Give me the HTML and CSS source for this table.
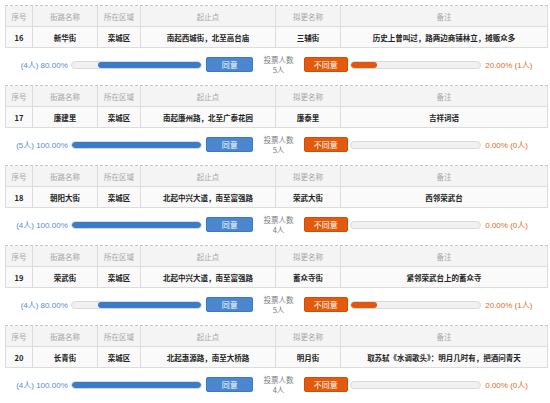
FILE: index.html
```html
<!DOCTYPE html>
<html lang="zh-CN">
<head>
<meta charset="utf-8">
<link rel="stylesheet" href="styles.css">
</head>
<body>
<div class="list">

  <div class="block">
    <div class="grid">
      <div class="th">序号</div><div class="th">街路名称</div><div class="th">所在区域</div><div class="th">起止点</div><div class="th">拟更名称</div><div class="th">备注</div>
      <div class="td">16</div><div class="td">新华街</div><div class="td">栾城区</div><div class="td">南起西城街，北至高台庙</div><div class="td">三辅街</div><div class="td">历史上曾叫过，路两边商铺林立，摊贩众多</div>
    </div>
    <div class="vote">
      <div class="lab lab-yes">(4人) 80.00%</div>
      <div class="bar bar-yes"><div class="fill fill-yes" style="width:80%"></div></div>
      <div class="btn btn-yes">同意</div>
      <div class="count">投票人数<br>5人</div>
      <div class="btn btn-no">不同意</div>
      <div class="bar bar-no"><div class="fill fill-no" style="width:20%"></div></div>
      <div class="lab lab-no">20.00% (1人)</div>
    </div>
  </div>

  <div class="block">
    <div class="grid">
      <div class="th">序号</div><div class="th">街路名称</div><div class="th">所在区域</div><div class="th">起止点</div><div class="th">拟更名称</div><div class="th">备注</div>
      <div class="td">17</div><div class="td">廉建里</div><div class="td">栾城区</div><div class="td">南起廉州路，北至广泰花园</div><div class="td">廉泰里</div><div class="td">吉祥词语</div>
    </div>
    <div class="vote">
      <div class="lab lab-yes">(5人) 100.00%</div>
      <div class="bar bar-yes"><div class="fill fill-yes" style="width:100%"></div></div>
      <div class="btn btn-yes">同意</div>
      <div class="count">投票人数<br>5人</div>
      <div class="btn btn-no">不同意</div>
      <div class="bar bar-no"><div class="fill fill-no" style="width:0%"></div></div>
      <div class="lab lab-no">0.00% (0人)</div>
    </div>
  </div>

  <div class="block">
    <div class="grid">
      <div class="th">序号</div><div class="th">街路名称</div><div class="th">所在区域</div><div class="th">起止点</div><div class="th">拟更名称</div><div class="th">备注</div>
      <div class="td">18</div><div class="td">朝阳大街</div><div class="td">栾城区</div><div class="td">北起中兴大道，南至富强路</div><div class="td">荣武大街</div><div class="td">西邻荣武台</div>
    </div>
    <div class="vote">
      <div class="lab lab-yes">(4人) 100.00%</div>
      <div class="bar bar-yes"><div class="fill fill-yes" style="width:100%"></div></div>
      <div class="btn btn-yes">同意</div>
      <div class="count">投票人数<br>4人</div>
      <div class="btn btn-no">不同意</div>
      <div class="bar bar-no"><div class="fill fill-no" style="width:0%"></div></div>
      <div class="lab lab-no">0.00% (0人)</div>
    </div>
  </div>

  <div class="block">
    <div class="grid">
      <div class="th">序号</div><div class="th">街路名称</div><div class="th">所在区域</div><div class="th">起止点</div><div class="th">拟更名称</div><div class="th">备注</div>
      <div class="td">19</div><div class="td">荣武街</div><div class="td">栾城区</div><div class="td">北起中兴大道，南至富强路</div><div class="td">蓄众寺街</div><div class="td">紧邻荣武台上的蓄众寺</div>
    </div>
    <div class="vote">
      <div class="lab lab-yes">(4人) 80.00%</div>
      <div class="bar bar-yes"><div class="fill fill-yes" style="width:80%"></div></div>
      <div class="btn btn-yes">同意</div>
      <div class="count">投票人数<br>5人</div>
      <div class="btn btn-no">不同意</div>
      <div class="bar bar-no"><div class="fill fill-no" style="width:20%"></div></div>
      <div class="lab lab-no">20.00% (1人)</div>
    </div>
  </div>

  <div class="block">
    <div class="grid">
      <div class="th">序号</div><div class="th">街路名称</div><div class="th">所在区域</div><div class="th">起止点</div><div class="th">拟更名称</div><div class="th">备注</div>
      <div class="td">20</div><div class="td">长青街</div><div class="td">栾城区</div><div class="td">北起惠源路，南至大桥路</div><div class="td">明月街</div><div class="td">取苏轼《水调歌头》：明月几时有，把酒问青天</div>
    </div>
    <div class="vote">
      <div class="lab lab-yes">(4人) 100.00%</div>
      <div class="bar bar-yes"><div class="fill fill-yes" style="width:100%"></div></div>
      <div class="btn btn-yes">同意</div>
      <div class="count">投票人数<br>4人</div>
      <div class="btn btn-no">不同意</div>
      <div class="bar bar-no"><div class="fill fill-no" style="width:0%"></div></div>
      <div class="lab lab-no">0.00% (0人)</div>
    </div>
  </div>

</div>
</body>
</html>
```

FILE: styles.css
```css
html, body {
  margin: 0;
  padding: 0;
  background: #ffffff;
}
body {
  font-family: "Liberation Sans", "Noto Sans CJK SC", sans-serif;
  font-size: 8px;
  color: #333;
}
.list {
  padding: 5px 2px 0 5px;
  width: 543px;
}
.block {
  display: flex;
  flex-direction: column;
}
.grid {
  display: grid;
  grid-template-columns: 26px 64px 42px 134px 64px 206px;
  grid-template-rows: 20px 20px;
  gap: 1px;
  background: #dcdcdc;
  background-clip: padding-box;
  border: 1px solid #dcdcdc;
  border-top: 1px dashed #c4c4c4;
}
.th, .td {
  display: flex;
  align-items: center;
  justify-content: center;
  white-space: nowrap;
  overflow: hidden;
  font-family: "Noto Sans CJK SC", "Liberation Sans", sans-serif;
}
.th {
  background: #f4f4f4;
  color: #a6a6a6;
  font-size: 7.5px;
}
.td {
  background: #fafafa;
  color: #222;
  font-size: 7.5px;
  font-weight: 700;
}
.vote {
  display: flex;
  align-items: center;
  height: 15px;
  margin: 9px 0 13px 0;
}
.lab {
  width: 63px;
  white-space: nowrap;
  font-family: "Liberation Sans", "Noto Sans CJK SC", sans-serif;
  font-size: 8px;
}
.lab-yes {
  text-align: right;
  margin-right: 3px;
  color: #5b88c8;
}
.lab-no {
  margin-left: 4px;
  color: #e46a26;
}
.bar {
  width: 132px;
  height: 8px;
  box-sizing: border-box;
  border: 1px solid #dadada;
  border-radius: 5px;
  background: #f1f1f1;
  display: flex;
  overflow: hidden;
}
.bar-yes {
  justify-content: flex-end;
}
.bar-no {
  justify-content: flex-start;
  margin-left: 2px;
}
.fill {
  height: 100%;
  border-radius: 4px;
}
.fill-yes { background: #3b7cc8; }
.fill-no { background: #e0570d; }
.btn {
  height: 15px;
  box-sizing: border-box;
  border-radius: 2px;
  color: #fff;
  font-family: "Noto Sans CJK SC", sans-serif;
  font-size: 8px;
  display: flex;
  align-items: center;
  justify-content: center;
}
.btn-yes {
  width: 47px;
  margin-left: 4px;
  background: #4a87cf;
  border: 1px solid #3d79c2;
}
.btn-no {
  width: 44px;
  background: #e3590d;
  border: 1px solid #d04e08;
}
.count {
  width: 51px;
  text-align: center;
  font-family: "Noto Sans CJK SC", sans-serif;
  font-size: 7.5px;
  line-height: 10px;
  color: #7a7a7a;
}
```
